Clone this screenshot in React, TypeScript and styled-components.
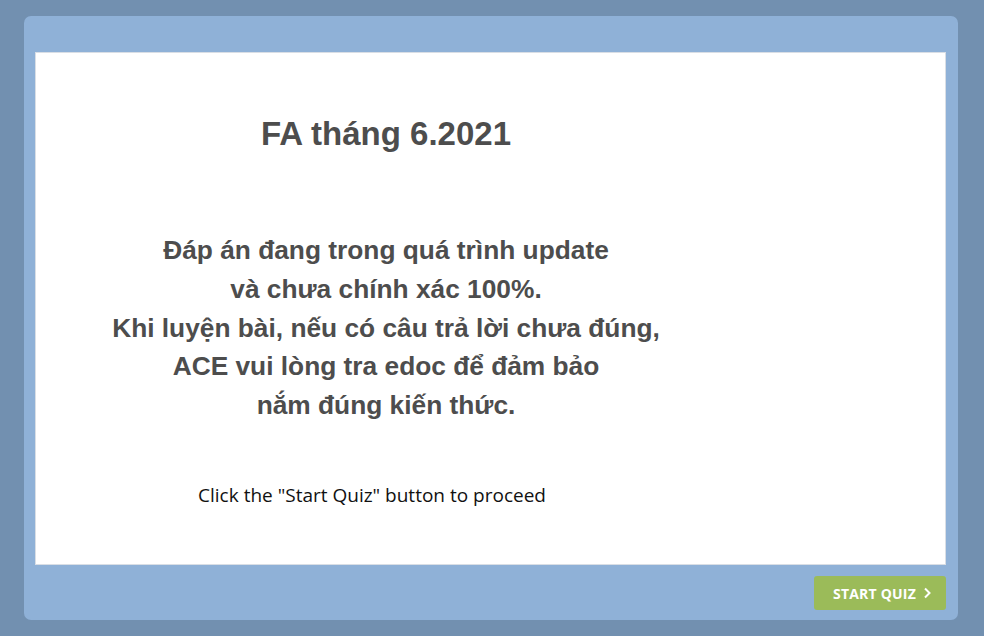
import React from "react";
import styled, { createGlobalStyle } from "styled-components";

const Global = createGlobalStyle`
  html, body { margin: 0; padding: 0; background: #7290b0; }
  body { width: 984px; height: 636px; overflow: hidden; }
`;

const Stage = styled.div`
  width: 984px;
  height: 636px;
  padding: 16px 26px 16px 24px;
  box-sizing: border-box;
`;

const Card = styled.div`
  width: 934px;
  height: 604px;
  background: #8fb1d7;
  border-radius: 7px;
  padding: 36px 12px 10px 11px;
  box-sizing: border-box;
  display: flex;
  flex-direction: column;
`;

const Panel = styled.div`
  width: 911px;
  height: 513px;
  box-sizing: border-box;
  background: #ffffff;
  border: 1px solid #d9dee5;
  display: flex;
  flex-direction: column;
`;

const TextColumn = styled.div`
  width: 700px;
  display: flex;
  flex-direction: column;
  align-items: center;
  text-align: center;
`;

const Title = styled.h1`
  margin: 61px 0 0 0;
  font-family: "Liberation Sans", Arial, sans-serif;
  font-weight: bold;
  font-size: 33px;
  line-height: 40px;
  color: #4d4d4d;
`;

const Body = styled.p`
  margin: 77px 0 0 0;
  font-family: "Liberation Sans", Arial, sans-serif;
  font-weight: bold;
  font-size: 26.3px;
  line-height: 38.75px;
  color: #4d4d4d;
`;

const Hint = styled.p`
  margin: 57px 0 0 -28px;
  font-family: "Open Sans", sans-serif;
  font-size: 19px;
  line-height: 26px;
  color: #111111;
`;

const Footer = styled.div`
  display: flex;
  justify-content: flex-end;
  padding-top: 11px;
`;

const Button = styled.button`
  width: 132px;
  height: 34px;
  border: none;
  border-radius: 3px;
  background: #9bbb59;
  color: #ffffff;
  font-family: "Open Sans", sans-serif;
  font-weight: 700;
  font-size: 14px;
  letter-spacing: 0.2px;
  display: flex;
  align-items: center;
  justify-content: center;
  gap: 7px;
  padding: 0 0 0 4px;
  cursor: pointer;
`;

export default function App() {
  return (
    <>
      <Global />
      <Stage>
        <Card>
          <Panel>
            <TextColumn>
              <Title>FA tháng 6.2021</Title>
              <Body>
                Đáp án đang trong quá trình update
                <br />
                và chưa chính xác 100%.
                <br />
                Khi luyện bài, nếu có câu trả lời chưa đúng,
                <br />
                ACE vui lòng tra edoc để đảm bảo
                <br />
                nắm đúng kiến thức.
              </Body>
              <Hint>Click the "Start Quiz" button to proceed</Hint>
            </TextColumn>
          </Panel>
          <Footer>
            <Button>
              START QUIZ
              <svg width="8" height="12" viewBox="0 0 8 12">
                <path d="M2 1.5 L6.5 6 L2 10.5" fill="none" stroke="#fff" strokeWidth="2" />
              </svg>
            </Button>
          </Footer>
        </Card>
      </Stage>
    </>
  );
}
